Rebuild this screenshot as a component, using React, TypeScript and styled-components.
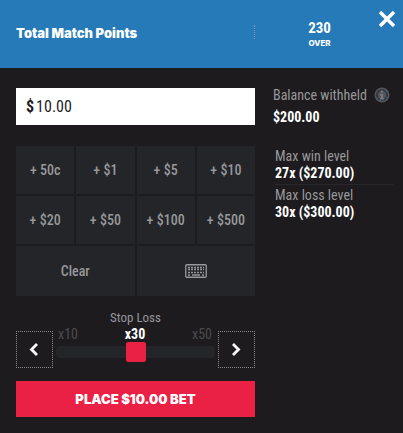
import React, { useState } from "react";
import styled, { createGlobalStyle } from "styled-components";

const GlobalStyle = createGlobalStyle`
  * { box-sizing: border-box; }
  body {
    margin: 0;
    background: #1d1b1e;
    font-family: "Roboto Condensed", "Liberation Sans Narrow", "Roboto", sans-serif;
    color: #fff;
  }
  button, input { font-family: inherit; }
  button { cursor: pointer; border: 0; padding: 0; }
`;

const Header = styled.header`
  display: flex;
  align-items: center;
  height: 68px;
  padding: 0 4px 0 16px;
  background: #257ab7;
`;

const Title = styled.h1`
  flex: 1;
  margin: 0;
  padding-bottom: 2px;
  font: 900 13px/20px "Inter", sans-serif;
`;

const Divider = styled.span`
  height: 14px;
  margin-bottom: 4px;
  border-left: 1px dotted #8f9095;
`;

const Selection = styled.div`
  width: 120px;
  padding-left: 9px;
  text-align: center;
`;

const Points = styled.div`
  font-size: 15px;
  line-height: 18px;
  font-weight: 700;
`;

const Side = styled.div`
  font: 800 8px/12px "Inter", sans-serif;
`;

const CloseButton = styled.button`
  align-self: flex-start;
  display: grid;
  place-items: center;
  width: 24px;
  height: 24px;
  margin-top: 7px;
  background: none;
  color: #fff;
`;

const Main = styled.main`
  display: grid;
  grid-template-columns: 1fr 120px;
  gap: 18px;
  padding: 20px 10px 16px 16px;
`;

const Column = styled.div`
  min-width: 0;
`;

const AmountField = styled.label`
  display: flex;
  align-items: center;
  height: 37px;
  padding: 0 10px;
  background: #fff;
  color: #1d1b1e;
  font-size: 16px;
`;

const Currency = styled.span`
  font-weight: 700;
`;

const AmountInput = styled.input`
  flex: 1;
  min-width: 0;
  padding: 0 0 0 2px;
  border: 0;
  outline: 0;
  background: none;
  color: inherit;
  font-size: inherit;
`;

const Keypad = styled.div`
  display: grid;
  grid-template-columns: repeat(4, 1fr);
  grid-template-rows: 48px 48px 50px;
  gap: 2px;
  margin-top: 21px;
`;

const Key = styled.button<{ $span?: number }>`
  grid-column: span ${({ $span }) => $span ?? 1};
  display: flex;
  align-items: center;
  justify-content: center;
  background: #232529;
  color: #98989a;
  font-size: 14px;
  font-weight: 500;
`;

const StopLoss = styled.div`
  display: grid;
  grid-template-columns: 37px 1fr 37px;
  align-items: end;
  gap: 3px;
  margin-top: 14px;
`;

const StepButton = styled.button`
  display: grid;
  place-items: center;
  height: 37px;
  border: 1px dotted #8a8a8c;
  background: none;
  color: #fff;
`;

const SliderGroup = styled.div`
  display: flex;
  flex-direction: column;
  padding-bottom: 6px;
`;

const SliderLabel = styled.label`
  text-align: center;
  color: #98989a;
  font-size: 13px;
  line-height: 16px;
`;

const Scale = styled.div`
  display: grid;
  grid-template-columns: 1fr 1fr 1fr;
  padding: 0 3px 0 2px;
  font-size: 14px;
  line-height: 16px;
  text-align: center;
  & > :first-child { text-align: left; }
  & > :last-child { text-align: right; }
`;

const Tick = styled.span<{ $active: boolean }>`
  color: ${({ $active }) => ($active ? "#fff" : "#4b4b4e")};
  font-weight: ${({ $active }) => ($active ? 700 : 400)};
`;

const Slider = styled.input`
  appearance: none;
  display: block;
  width: 100%;
  height: 20px;
  margin: 0;
  background: none;
  &::-webkit-slider-runnable-track {
    height: 12px;
    border-radius: 4px;
    background: #232529;
  }
  &::-webkit-slider-thumb {
    appearance: none;
    width: 20px;
    height: 20px;
    margin-top: -4px;
    border-radius: 2px;
    background: #eb2045;
  }
`;

const PlaceBet = styled.button`
  width: 100%;
  height: 36px;
  margin-top: 13px;
  background: #eb2045;
  color: #fff;
  && { font: 900 13px/20px "Inter", sans-serif; }
`;

const Stat = styled.div`
  font-size: 14px;
  line-height: 17px;
`;

const Balance = styled(Stat)`
  line-height: 22px;
  margin-top: -4px;
`;

const Levels = styled.div`
  margin: 20px 0 0 2px;
`;

const Level = styled(Stat)`
  & + & {
    margin-top: 2px;
    padding-top: 2px;
    border-top: 1px solid #28282c;
  }
`;

const StatLabel = styled.div`
  display: flex;
  align-items: center;
  justify-content: space-between;
  padding-right: 3px;
  color: #98989a;
  white-space: nowrap;
`;

const StatValue = styled.div`
  font-weight: 700;
`;

const CloseIcon = () => (
  <svg width="18" height="18" viewBox="0 0 18 18" aria-hidden="true">
    <path d="M2 2 16 16M16 2 2 16" stroke="currentColor" strokeWidth="3.4" />
  </svg>
);

const InfoIcon = () => (
  <svg width="16" height="16" viewBox="0 0 16 16" role="img" aria-label="Info">
    <circle cx="8" cy="8" r="7.5" fill="#53565b" />
    <circle cx="8" cy="8" r="5" fill="none" stroke="#34373c" strokeWidth="2" />
    <path d="M7 3.5h2v2H7zM6 7h3v4h1v1.5H6V11h1V8.5H6z" fill="#77797d" />
    <path d="M3 11.500h1v1H3zM12 4h1v1h-1zM12.500 10h1v1h-1zM6 13h1v1H6z" fill="#257ab7" />
  </svg>
);

const KeyboardIcon = () => (
  <svg width="22" height="14" viewBox="0 0 22 14" fill="none" stroke="currentColor" role="img" aria-label="Keyboard">
    <rect x=".75" y=".75" width="20.500" height="12.500" rx="1" strokeWidth="1.300" />
    <path d="M3 3.500h16M3 5.500h16M3 8.500h16" strokeWidth="1.400" strokeDasharray="2 1" />
    <path d="M3 11h2M7 11h8M17 11h2" strokeWidth="1.300" />
  </svg>
);

const Chevron = ({ direction }: { direction: "left" | "right" }) => (
  <svg width="13" height="15" viewBox="0 0 13 15" fill="none" aria-hidden="true">
    <path
      d={direction === "left" ? "M9 2 3.500 7.500 9 13" : "M3 2l5.500 5.500L3 13"}
      stroke="currentColor"
      strokeWidth="2.800"
    />
  </svg>
);

const increments: [string, number][] = [
  ["50c", 0.5],
  ["$1", 1],
  ["$5", 5],
  ["$10", 10],
  ["$20", 20],
  ["$50", 50],
  ["$100", 100],
  ["$500", 500],
];

const ticks = [10, 30, 50];

export default function App() {
  const [amount, setAmount] = useState("10.00");
  const [stop, setStop] = useState(30);
  const total = Number(amount) || 0;
  const step = (by: number) => setStop((s) => Math.min(50, Math.max(10, s + by)));

  return (
    <>
      <GlobalStyle />
      <Header>
        <Title>Total Match Points</Title>
        <Divider />
        <Selection>
          <Points>230</Points>
          <Side>OVER</Side>
        </Selection>
        <CloseButton aria-label="Close">
          <CloseIcon />
        </CloseButton>
      </Header>
      <Main>
        <Column>
          <AmountField>
            <Currency>$</Currency>
            <AmountInput aria-label="Bet amount" value={amount} onChange={(e) => setAmount(e.target.value)} />
          </AmountField>
          <Keypad>
            {increments.map(([label, value]) => (
              <Key key={label} onClick={() => setAmount((total + value).toFixed(2))}>
                + {label}
              </Key>
            ))}
            <Key $span={2} onClick={() => setAmount("0.00")}>
              Clear
            </Key>
            <Key $span={2} aria-label="Keyboard">
              <KeyboardIcon />
            </Key>
          </Keypad>
          <StopLoss>
            <StepButton aria-label="Decrease stop loss" onClick={() => step(-20)}>
              <Chevron direction="left" />
            </StepButton>
            <SliderGroup>
              <SliderLabel htmlFor="stop-loss">Stop Loss</SliderLabel>
              <Scale>
                {ticks.map((t) => (
                  <Tick key={t} $active={t === stop}>
                    x{t}
                  </Tick>
                ))}
              </Scale>
              <Slider
                id="stop-loss"
                type="range"
                min={10}
                max={50}
                step={20}
                value={stop}
                onChange={(e) => setStop(Number(e.target.value))}
              />
            </SliderGroup>
            <StepButton aria-label="Increase stop loss" onClick={() => step(20)}>
              <Chevron direction="right" />
            </StepButton>
          </StopLoss>
          <PlaceBet>PLACE ${total.toFixed(2)} BET</PlaceBet>
        </Column>
        <Column>
          <Balance>
            <StatLabel>
              Balance withheld
              <InfoIcon />
            </StatLabel>
            <StatValue>$200.00</StatValue>
          </Balance>
          <Levels>
            <Level>
              <StatLabel>Max win level</StatLabel>
              <StatValue>27x ($270.00)</StatValue>
            </Level>
            <Level>
              <StatLabel>Max loss level</StatLabel>
              <StatValue>30x ($300.00)</StatValue>
            </Level>
          </Levels>
        </Column>
      </Main>
    </>
  );
}
